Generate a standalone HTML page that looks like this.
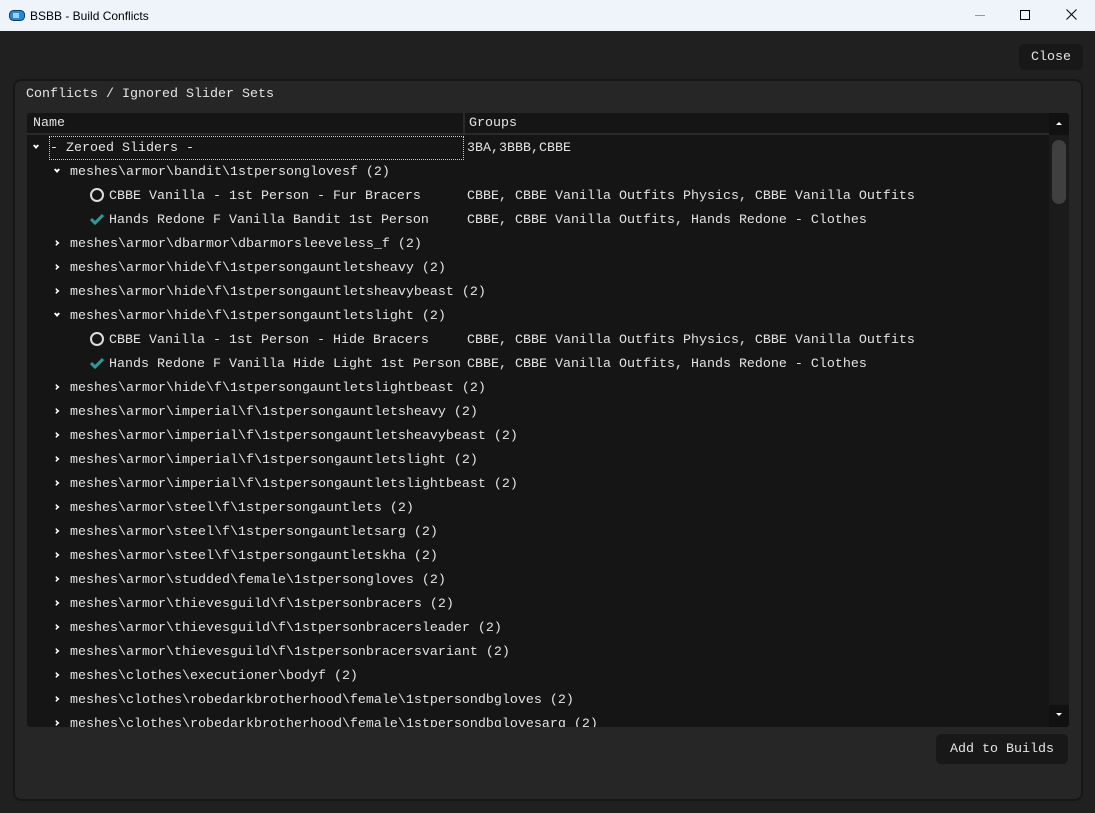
<!DOCTYPE html><html><head><style>
*{margin:0;padding:0;box-sizing:border-box}
body{width:1095px;height:813px;background:#202020;position:relative;overflow:hidden;font-family:"Liberation Mono",monospace;font-size:13.33px;color:#e4e4e4}
.tb{position:absolute;left:0;top:0;width:1095px;height:31px;background:#eff3fa;font-family:"Liberation Sans",sans-serif;font-size:12px;color:#000}
.panel{position:absolute;left:13px;top:79px;width:1070px;height:722px;background:#262626;border:2px solid #161616;border-radius:8px}
.tbl{position:absolute;left:27px;top:113px;width:1042px;height:614px;background:#151515;overflow:hidden;border-radius:3px}
.r{position:absolute;white-space:pre;line-height:16px}
.btn{position:absolute;background:#181818;border-radius:5px;color:#e4e4e4;text-align:center}
</style></head><body>
<div class="tb">
<svg style="position:absolute;left:9px;top:10px" width="16" height="11"><rect x="0.5" y="0.5" width="15" height="10" rx="4" fill="#2a86d6" stroke="#103a66"/><rect x="4" y="3" width="6" height="5" fill="#9fd2ff"/></svg>
<span style="position:absolute;left:30px;top:9px">BSBB - Build Conflicts</span>
<div style="position:absolute;left:975px;top:15px;width:10px;height:1px;background:#999"></div>
<div style="position:absolute;left:1020px;top:10px;width:10px;height:10px;border:1px solid #000"></div>
<svg style="position:absolute;left:1066px;top:9px" width="11" height="11"><path d="M0.5 0.5L10.5 10.5M10.5 0.5L0.5 10.5" stroke="#000"/></svg>
</div>
<div class="btn" style="left:1019px;top:44px;width:64px;height:26px;line-height:26px;padding-top:1px">Close</div>
<div class="panel"></div>
<div class="r" style="left:26px;top:87px">Conflicts / Ignored Slider Sets</div>
<div class="tbl">
<div style="position:absolute;left:0;top:0;width:1022px;height:22px;background:#151515;border-bottom:2px solid #2a2a2a"></div>
<div style="position:absolute;left:436px;top:0;width:2px;height:22px;background:#2a2a2a"></div>
<div class="r" style="left:6px;top:3px">Name</div>
<div class="r" style="left:442px;top:3px">Groups</div>
<div style="position:absolute;left:1022px;top:0;width:20px;height:614px;background:#1b1b1b"></div>
<div style="position:absolute;left:1022px;top:0;width:20px;height:22px;background:#111"></div>
<div style="position:absolute;left:1022px;top:592px;width:20px;height:22px;background:#111"></div>
<div style="position:absolute;left:1025px;top:27px;width:14px;height:64px;background:#404040;border-radius:7px"></div>
<svg style="position:absolute;left:1027px;top:6px" width="10" height="10"><path d="M2 6L5 3L8 6Z" fill="#fff"/></svg>
<svg style="position:absolute;left:1027px;top:596px" width="10" height="10"><path d="M2 4L5 7L8 4Z" fill="#fff"/></svg>
<div style="position:absolute;left:22px;top:23px;width:415px;height:24px;border:1px dotted #ccc"></div>
</div>
<div id="rows" style="position:absolute;left:0;top:0;width:1095px;height:727px;overflow:hidden"></div>
<div class="btn" style="left:936px;top:734px;width:132px;height:30px;line-height:30px;padding-top:1px">Add to Builds</div>
<script>
var R=[[0,1,"- Zeroed Sliders -","3BA,3BBB,CBBE"],[1,1,"meshes\\armor\\bandit\\1stpersonglovesf (2)"],[2,"o","CBBE Vanilla - 1st Person - Fur Bracers","CBBE, CBBE Vanilla Outfits Physics, CBBE Vanilla Outfits"],[2,"c","Hands Redone F Vanilla Bandit 1st Person","CBBE, CBBE Vanilla Outfits, Hands Redone - Clothes"],[1,0,"meshes\\armor\\dbarmor\\dbarmorsleeveless_f (2)"],[1,0,"meshes\\armor\\hide\\f\\1stpersongauntletsheavy (2)"],[1,0,"meshes\\armor\\hide\\f\\1stpersongauntletsheavybeast (2)"],[1,1,"meshes\\armor\\hide\\f\\1stpersongauntletslight (2)"],[2,"o","CBBE Vanilla - 1st Person - Hide Bracers","CBBE, CBBE Vanilla Outfits Physics, CBBE Vanilla Outfits"],[2,"c","Hands Redone F Vanilla Hide Light 1st Person","CBBE, CBBE Vanilla Outfits, Hands Redone - Clothes"],[1,0,"meshes\\armor\\hide\\f\\1stpersongauntletslightbeast (2)"],[1,0,"meshes\\armor\\imperial\\f\\1stpersongauntletsheavy (2)"],[1,0,"meshes\\armor\\imperial\\f\\1stpersongauntletsheavybeast (2)"],[1,0,"meshes\\armor\\imperial\\f\\1stpersongauntletslight (2)"],[1,0,"meshes\\armor\\imperial\\f\\1stpersongauntletslightbeast (2)"],[1,0,"meshes\\armor\\steel\\f\\1stpersongauntlets (2)"],[1,0,"meshes\\armor\\steel\\f\\1stpersongauntletsarg (2)"],[1,0,"meshes\\armor\\steel\\f\\1stpersongauntletskha (2)"],[1,0,"meshes\\armor\\studded\\female\\1stpersongloves (2)"],[1,0,"meshes\\armor\\thievesguild\\f\\1stpersonbracers (2)"],[1,0,"meshes\\armor\\thievesguild\\f\\1stpersonbracersleader (2)"],[1,0,"meshes\\armor\\thievesguild\\f\\1stpersonbracersvariant (2)"],[1,0,"meshes\\clothes\\executioner\\bodyf (2)"],[1,0,"meshes\\clothes\\robedarkbrotherhood\\female\\1stpersondbgloves (2)"],[1,0,"meshes\\clothes\\robedarkbrotherhood\\female\\1stpersondbglovesarg (2)"]];
var h="";R.forEach(function(r,i){var y=147+i*24,t=y-6;
if(r[0]<2){var cx=r[0]==0?36:57;h+=r[1]?'<svg style="position:absolute;left:'+(cx-4)+'px;top:'+(y-4)+'px" width="8" height="8"><path d="M1 2.5L4 6L7 2.5L5.5 1.5L4 3L2.5 1.5Z" fill="#fff"/></svg>':'<svg style="position:absolute;left:'+(cx-3)+'px;top:'+(y-4)+'px" width="8" height="8"><path d="M2 1L5.5 4L2 7L1.5 5.5L3 4L1.5 2.5Z" fill="#fff"/></svg>';
h+='<div class="r" style="left:'+(r[0]==0?50:70)+'px;top:'+t+'px">'+r[2]+'</div>';}
else{h+=r[1]=="o"?'<div style="position:absolute;left:90px;top:'+(y-7)+'px;width:14px;height:14px;border:2px solid #ddd;border-radius:50%"></div>':'<svg style="position:absolute;left:90px;top:'+(y-6)+'px" width="14" height="12"><path d="M1 6L5 10L13 2" stroke="#2a9d9a" stroke-width="3" fill="none"/></svg>';
h+='<div class="r" style="left:109px;top:'+t+'px">'+r[2]+'</div>';}
if(r[3])h+='<div class="r" style="left:467px;top:'+t+'px">'+r[3]+'</div>';});
document.getElementById("rows").innerHTML=h;
</script>
</body></html>
